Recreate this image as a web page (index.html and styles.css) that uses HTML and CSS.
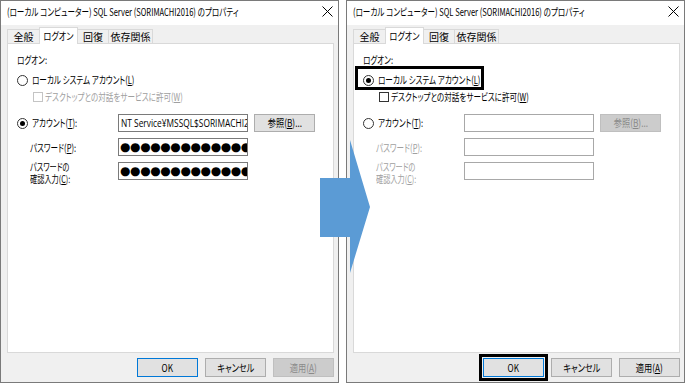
FILE: index.html
```html
<!DOCTYPE html>
<html lang="ja">
<head>
<meta charset="utf-8">
<link rel="stylesheet" href="styles.css">
</head>
<body>
<div class="screen">
  <div class="dialog">
    <div class="titlebar">
      <span class="t title">(ローカル コンピューター) SQL Server (SORIMACHI2016) のプロパティ</span>
      <svg class="close" width="11" height="11" viewBox="0 0 11 11"><path d="M0.5 0.5 L10.5 10.5 M10.5 0.5 L0.5 10.5" stroke="#000" stroke-width="1" fill="none"/></svg>
    </div>
    <div class="tabs">
      <div class="tab t1">全般</div>
      <div class="tab t2 active"><span class="tk">ログオン</span></div>
      <div class="tab t3">回復</div>
      <div class="tab t4">依存関係</div>
    </div>
    <div class="panel">
      <div class="caption"><span class="t">ログオン:</span></div>
      <div class="opt r1"><span class="radio"></span><span class="t">ローカル システム アカウント(<u>L</u>)</span></div>
      <div class="chk disabled"><span class="box"></span><span class="t">デスクトップとの対話をサービスに許可(<u>W</u>)</span></div>
      <div class="grid">
        <div class="opt"><span class="radio on"></span><span class="t">アカウント(<u>T</u>):</span></div>
        <div class="field text"><span class="t tl">NT Service¥MSSQL$SORIMACHI2016</span></div>
        <div class="btn small"><span class="tc">参照(<u>B</u>)...</span></div>
        <div class="lbl"><span class="t">パスワード(<u>P</u>):</span></div>
        <div class="field pw">●●●●●●●●●●●●●●●●●●</div>
        <div></div>
        <div class="lbl two"><span class="t">パスワードの</span><br><span class="t">確認入力(<u>C</u>):</span></div>
        <div class="field pw">●●●●●●●●●●●●●●●●●●</div>
      </div>
    </div>
    <div class="buttons">
      <div class="btn default"><span class="tc">OK</span></div>
      <div class="btn"><span class="tc">キャンセル</span></div>
      <div class="btn off"><span class="tc">適用(<u>A</u>)</span></div>
    </div>
  </div>

  <div class="dialog">
    <div class="titlebar">
      <span class="t title">(ローカル コンピューター) SQL Server (SORIMACHI2016) のプロパティ</span>
      <svg class="close" width="11" height="11" viewBox="0 0 11 11"><path d="M0.5 0.5 L10.5 10.5 M10.5 0.5 L0.5 10.5" stroke="#000" stroke-width="1" fill="none"/></svg>
    </div>
    <div class="tabs">
      <div class="tab t1">全般</div>
      <div class="tab t2 active"><span class="tk">ログオン</span></div>
      <div class="tab t3">回復</div>
      <div class="tab t4">依存関係</div>
    </div>
    <div class="panel">
      <div class="mark"></div>
      <div class="caption"><span class="t">ログオン:</span></div>
      <div class="opt r1"><span class="radio on"></span><span class="t">ローカル システム アカウント(<u>L</u>)</span></div>
      <div class="chk"><span class="box"></span><span class="t">デスクトップとの対話をサービスに許可(<u>W</u>)</span></div>
      <div class="grid">
        <div class="opt"><span class="radio"></span><span class="t">アカウント(<u>T</u>):</span></div>
        <div class="field empty"></div>
        <div class="btn small off"><span class="tc">参照(<u>B</u>)...</span></div>
        <div class="lbl dim"><span class="t">パスワード(<u>P</u>):</span></div>
        <div class="field empty"></div>
        <div></div>
        <div class="lbl two dim"><span class="t">パスワードの</span><br><span class="t">確認入力(<u>C</u>):</span></div>
        <div class="field empty"></div>
      </div>
    </div>
    <div class="buttons">
      <div class="btn default focus"><span class="tc">OK</span></div>
      <div class="btn"><span class="tc">キャンセル</span></div>
      <div class="btn"><span class="tc">適用(<u>A</u>)</span></div>
    </div>
  </div>

  <svg class="arrow" width="60" height="140" viewBox="315 138 60 140">
    <polygon points="320,178 350,178 350,140 370,207 350,273 350,237 320,237" fill="#5b9bd5"/>
  </svg>
</div>
</body>
</html>
```

FILE: styles.css
```css
* { box-sizing: border-box; }
html, body { margin: 0; padding: 0; background: #fff; }
body {
  font-family: "Noto Sans CJK JP", "Noto Sans", sans-serif;
  font-size: 10.5px;
  font-feature-settings: "palt";
  color: #000;
  width: 685px;
  height: 383px;
  overflow: hidden;
}
u { text-decoration: underline; text-underline-offset: 1px; }

/* condensed text (the original UI font is much narrower) */
.t {
  display: inline-block;
  white-space: nowrap;
  transform: scaleX(0.72);
  transform-origin: 0 50%;
}
.tc {
  display: inline-block;
  white-space: nowrap;
  transform: scaleX(0.78);
  transform-origin: 50% 50%;
}
.tk {
  display: inline-block;
  white-space: nowrap;
  transform: scaleX(0.82);
  transform-origin: 50% 50%;
}

.screen {
  position: relative;
  display: flex;
  gap: 7px;
  width: 685px;
  height: 383px;
}
.dialog {
  width: 339px;
  height: 383px;
  border: 1px solid #7a7a7a;
  background: #f0f0f0;
  display: flex;
  flex-direction: column;
}
.titlebar {
  height: 24px;
  background: #fff;
  display: flex;
  align-items: center;
  padding: 0 5px 3px 6px;
  flex: none;
}
.title {
  font-size: 10.5px;
  flex: 1 1 0;
  min-width: 0;
}
.close { flex: none; }
.tabs {
  height: 18px;
  display: flex;
  align-items: flex-end;
  padding-left: 6px;
  flex: none;
  font-size: 10px;
}
.tab {
  height: 14px;
  line-height: 13px;
  border: 1px solid #d9d9d9;
  border-bottom: none;
  text-align: center;
  background: #f0f0f0;
  color: #000;
  margin-right: -1px;
  white-space: nowrap;
  overflow: hidden;
}
.t1 { width: 33px; }
.t2 { width: 39px; }
.t3 { width: 32px; }
.t4 { width: 45px; }
.tab.active {
  height: 17px;
  line-height: 15px;
  background: #fff;
  margin-bottom: -1px;
  position: relative;
  z-index: 1;
}
.panel {
  position: relative;
  flex: 1;
  background: #fff;
  border: 1px solid #d9d9d9;
  margin: 0 4px 0 6px;
  padding: 9px 0 0 9px;
}
.caption { line-height: 14px; }
.opt { display: flex; align-items: center; height: 14px; line-height: 14px; }
.r1 { margin-top: 6px; }
.radio {
  width: 11px; height: 11px;
  border: 1px solid #333;
  border-radius: 50%;
  margin-right: 4px;
  display: inline-flex;
  align-items: center;
  justify-content: center;
  flex: none;
  background: #fff;
}
.radio.on::after {
  content: "";
  width: 5px; height: 5px;
  border-radius: 50%;
  background: #000;
}
.chk {
  display: flex; align-items: center;
  height: 14px; line-height: 14px;
  margin-top: 3px;
  padding-left: 16px;
}
.box {
  width: 10px; height: 10px;
  border: 1px solid #333;
  margin-right: 2px;
  flex: none;
  background: #fff;
}
.chk.disabled { color: #a0a0a0; }
.chk.disabled .box { border-color: #c4c4c4; }
.grid {
  margin-top: 10px;
  display: grid;
  grid-template-columns: 95px 130px 61px;
  grid-auto-rows: 18px;
  column-gap: 6px;
  row-gap: 6px;
  align-items: center;
}
.grid .opt { height: 18px; }
.lbl { padding-left: 13px; line-height: 13px; white-space: nowrap; }
.lbl.two { margin-top: 4px; font-size: 10px; line-height: 12.5px; }
.lbl.dim { color: #a0a0a0; }
.field {
  height: 18px;
  border: 1px solid #7a7a7a;
  background: #fff;
  overflow: hidden;
  white-space: nowrap;
}
.field.empty { border-color: #a8a8a8; }
.field.text {
  font-family: "Open Sans", "Noto Sans", sans-serif;
  font-size: 11px;
  line-height: 16px;
  padding-left: 2px;
}
.field.text .tl { transform: scaleX(0.76); }
.field.pw {
  font-family: "DejaVu Sans", sans-serif;
  font-size: 12px;
  line-height: 16px;
  padding-left: 1px;
  letter-spacing: -0.4px;
}
.btn {
  height: 19px;
  width: 61px;
  border: 1px solid #adadad;
  background: #e1e1e1;
  text-align: center;
  line-height: 17px;
  font-size: 10.5px;
  white-space: nowrap;
  overflow: hidden;
}
.btn.small { height: 18px; line-height: 16px; }
.btn.default { border-color: #0078d7; }
.btn.off { background: #cccccc; border-color: #bfbfbf; color: #8a8a8a; }
.btn.focus { outline: 3px solid #000; outline-offset: 1px; overflow: visible; }
.buttons {
  height: 29px;
  flex: none;
  display: flex;
  justify-content: flex-end;
  align-items: center;
  gap: 7px;
  padding-right: 4px;
}
.mark {
  position: absolute;
  left: 1px;
  top: 22px;
  width: 129px;
  height: 24px;
  border: 3px solid #000;
}
.arrow {
  position: absolute;
  left: 315px;
  top: 138px;
}
```
